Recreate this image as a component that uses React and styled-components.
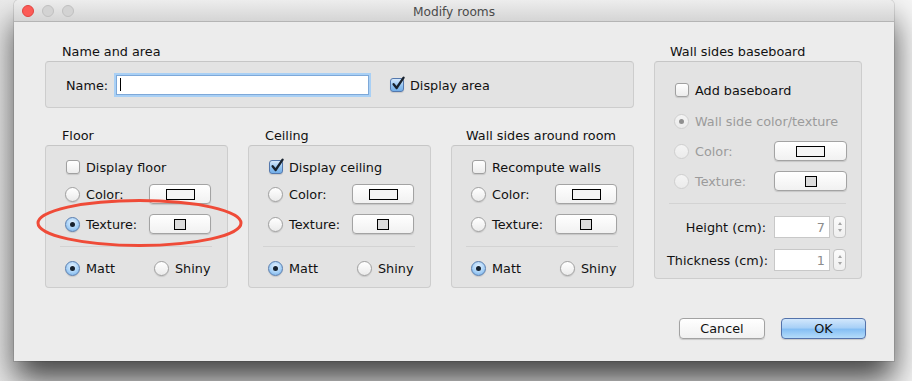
import React from 'react';
import styled, { createGlobalStyle } from 'styled-components';

const Global = createGlobalStyle`
  html, body { margin: 0; padding: 0; }
  body {
    background: #f5f5f5;
    font-family: "DejaVu Sans", "Liberation Sans", sans-serif;
    font-size: 12.8px;
    line-height: 16px;
    color: #111;
  }
`;

const Stage = styled.div`
  width: 912px;
  height: 381px;
  overflow: hidden;
  box-sizing: border-box;
  padding-left: 14px;
  background: linear-gradient(to right, #ececec 0, #f6f6f6 30px, #f6f6f6 100%);
`;

const Window = styled.div`
  position: relative;
  width: 880px;
  height: 361px;
  background: #ececec;
  border-radius: 5px 5px 0 0;
  box-shadow: 0 20px 32px rgba(0, 0, 0, 0.72), 0 0 0 1px rgba(0, 0, 0, 0.1);
  display: flex;
  flex-direction: column;
`;

const TitleBar = styled.div`
  height: 22px;
  flex: none;
  box-sizing: border-box;
  border-bottom: 1px solid #b4b4b4;
  border-radius: 5px 5px 0 0;
  background: linear-gradient(#ededed, #d5d5d5);
  display: grid;
  grid-template-columns: 1fr auto 1fr;
  align-items: center;
`;

const Lights = styled.div`
  display: flex;
  gap: 8px;
  padding-left: 8px;
`;

const Light = styled.span`
  width: 12px;
  height: 12px;
  box-sizing: border-box;
  border-radius: 50%;
  background: ${p => (p.$red ? '#fc5b57' : '#d3d3d3')};
  border: 1px solid ${p => (p.$red ? '#e1443f' : '#c0c0c0')};
`;

const Title = styled.div`
  font-size: 12.2px;
  color: #4a4a4a;
  padding-top: 2px;
`;

const Body = styled.div`
  display: flex;
  gap: 20px;
  padding: 21px 0 0 31px;
`;

const LeftCol = styled.div`
  width: 589px;
  display: flex;
  flex-direction: column;
`;

const RightCol = styled.div`
  width: 208px;
`;

const GroupGrid = styled.div`
  display: grid;
  grid-template-columns: repeat(3, 183px);
  gap: 20px;
  margin-top: 19px;
`;

const SectionTitle = styled.div`
  height: 17px;
  padding-top: 1px;
  box-sizing: border-box;
  margin-bottom: 1px;
  padding-left: ${p => p.$pl ?? 17}px;
`;

const GroupBox = styled.div`
  box-sizing: border-box;
  height: ${p => p.$h}px;
  background: #e3e3e3;
  border: 1px solid #cdcdcd;
  border-top-color: #c6c6c6;
  border-radius: 4px;
  padding-top: ${p => p.$pt ?? 0}px;
  display: flex;
  flex-direction: ${p => (p.$row ? 'row' : 'column')};
  align-items: ${p => (p.$row ? 'center' : 'stretch')};
  padding-left: ${p => (p.$row ? 20 : 0)}px;
`;

const NameLabel = styled.span`
  width: 50px;
  padding-top: 2px;
`;

const NameInput = styled.div`
  width: 253px;
  height: 20px;
  box-sizing: border-box;
  background: #fff;
  border: 1px solid #7ea8d8;
  box-shadow: 0 0 0 2px #a9d0f5;
  display: flex;
  align-items: center;
  padding-left: 3px;
`;

const Caret = styled.span`
  width: 1px;
  height: 13px;
  background: #000;
`;

const OptionRow = styled.div`
  display: flex;
  align-items: center;
  height: 20px;
  margin-top: ${p => p.$mt || 0}px;
  padding: 0 ${p => p.$pr ?? 16}px 0 19px;
  color: ${p => (p.$disabled ? '#9b9b9b' : '#111')};
`;

const InlineOption = styled.div`
  display: flex;
  align-items: center;
  margin-left: ${p => p.$ml || 0}px;
  width: ${p => (p.$w ? p.$w + 'px' : 'auto')};
`;

const RadioDot = styled.span`
  position: relative;
  flex: none;
  width: 15px;
  height: 15px;
  box-sizing: border-box;
  border-radius: 50%;
  border: 1px solid ${p => (p.$disabled ? '#cfcfcf' : p.$on ? '#5a7eaf' : '#a0a0a0')};
  background: ${p =>
    p.$disabled
      ? 'linear-gradient(#f4f4f4, #ebebeb)'
      : p.$on
      ? 'radial-gradient(circle at 50% 35%, #e6f2fe 0, #a7d1f7 55%, #6ea9e3 100%)'
      : 'linear-gradient(#ffffff, #ebebeb)'};
  box-shadow: ${p => (p.$disabled ? 'none' : '0 1px 1px rgba(0,0,0,0.12)')};
  &::after {
    content: '';
    display: ${p => (p.$on ? 'block' : 'none')};
    position: absolute;
    left: 50%;
    top: 50%;
    width: 5px;
    height: 5px;
    margin: -2.5px 0 0 -2.5px;
    border-radius: 50%;
    background: ${p => (p.$disabled ? '#8f8f8f' : '#17222f')};
  }
`;

const CheckBox = styled.span`
  position: relative;
  flex: none;
  width: 14px;
  height: 14px;
  margin-left: 1px;
  box-sizing: border-box;
  border-radius: 3px;
  border: 1px solid ${p => (p.$on ? '#5478ad' : '#a0a0a0')};
  background: ${p =>
    p.$on ? 'linear-gradient(#d6e9fc, #8fc1f0 60%, #73aee8)' : 'linear-gradient(#ffffff, #ececec)'};
  box-shadow: 0 1px 1px rgba(0, 0, 0, 0.12);
`;

const CheckMark = styled.svg`
  position: absolute;
  left: -1px;
  top: -4px;
  overflow: visible;
`;

const OptText = styled.span`
  margin-left: 6px;
  padding-top: 2px;
  white-space: nowrap;
`;

const SwatchButton = styled.div`
  margin-left: auto;
  width: ${p => p.$w}px;
  height: 20px;
  box-sizing: border-box;
  border: 1px solid #a3a3a3;
  border-radius: 4px;
  background: linear-gradient(#ffffff, #f1f1f1);
  box-shadow: 0 1px 1px rgba(0, 0, 0, 0.13);
  display: flex;
  align-items: center;
  justify-content: center;
`;

const Swatch = styled.span`
  width: ${p => (p.$texture ? 12 : 29)}px;
  height: 11px;
  box-sizing: border-box;
  border: 1px solid #000;
  background: ${p => (p.$texture ? '#dcdcdc' : '#f4f4f4')};
`;

const Divider = styled.div`
  height: 1px;
  background: #d3d3d3;
  margin: ${p => p.$mt}px 15px 0 14px;
`;

const NumRow = styled.div`
  display: flex;
  align-items: center;
  height: 22px;
  margin-top: ${p => p.$mt || 0}px;
  padding-left: 12px;
`;

const NumLabel = styled.span`
  width: 99px;
  text-align: right;
  white-space: nowrap;
  padding-top: 2px;
`;

const NumField = styled.div`
  margin-left: 8px;
  width: 56px;
  height: 22px;
  box-sizing: border-box;
  background: #fff;
  border: 1px solid #c8c8c8;
  color: #8c8c8c;
  text-align: right;
  padding-right: 4px;
  padding-top: 2px;
  line-height: 18px;
`;

const Stepper = styled.div`
  margin-left: 3px;
  width: 13px;
  height: 22px;
  box-sizing: border-box;
  border: 1px solid #c3c3c3;
  border-radius: 4px;
  background: linear-gradient(#fbfbfb, #efefef);
  display: flex;
  flex-direction: column;
  align-items: center;
  justify-content: center;
  gap: 4px;
`;

const Arrow = styled.span`
  width: 0;
  height: 0;
  border-left: 2.5px solid transparent;
  border-right: 2.5px solid transparent;
  ${p => (p.$down ? 'border-top: 3px solid #a5a5a5;' : 'border-bottom: 3px solid #a5a5a5;')}
`;

const Footer = styled.div`
  display: flex;
  justify-content: flex-end;
  gap: 16px;
  padding-right: 28px;
  margin-top: 30px;
`;

const DialogButton = styled.div`
  width: ${p => p.$w}px;
  height: 21px;
  box-sizing: border-box;
  border-radius: 4px;
  border: 1px solid ${p => (p.$primary ? '#5473ab' : '#a2a2a2')};
  background: ${p =>
    p.$primary
      ? 'linear-gradient(#d2e7fc 0, #a9d1f7 45%, #86bff4 55%, #b5dcfa 100%)'
      : 'linear-gradient(#ffffff, #f0f0f0)'};
  box-shadow: 0 1px 1px rgba(0, 0, 0, 0.15);
  display: flex;
  align-items: center;
  justify-content: center;
  padding-top: 1px;
  color: #111;
`;

const Annotation = styled.svg`
  position: absolute;
  left: 0;
  top: 0;
  pointer-events: none;
`;

function Radio({ on, disabled, children, ml, w }) {
  return (
    <InlineOption $ml={ml} $w={w}>
      <RadioDot $on={on} $disabled={disabled} />
      <OptText>{children}</OptText>
    </InlineOption>
  );
}

function Check({ on, children }) {
  return (
    <InlineOption>
      <CheckBox $on={on}>
        {on && (
          <CheckMark width="16" height="16" viewBox="0 0 16 16">
            <path d="M3.6 9.2 L6.6 13 L13.6 2.6" fill="none" stroke="#18222e" strokeWidth="2.3" strokeLinecap="round" strokeLinejoin="round" />
          </CheckMark>
        )}
      </CheckBox>
      <OptText>{children}</OptText>
    </InlineOption>
  );
}

function SurfaceGroup({ title, titlePl, checkLabel, checked, colorSel, textureSel }) {
  return (
    <div>
      <SectionTitle $pl={titlePl}>{title}</SectionTitle>
      <GroupBox $h={143} $pt={11}>
        <OptionRow>
          <Check on={checked}>{checkLabel}</Check>
        </OptionRow>
        <OptionRow $mt={7}>
          <Radio on={colorSel}>Color:</Radio>
          <SwatchButton $w={62}><Swatch /></SwatchButton>
        </OptionRow>
        <OptionRow $mt={10}>
          <Radio on={textureSel}>Texture:</Radio>
          <SwatchButton $w={62}><Swatch $texture /></SwatchButton>
        </OptionRow>
        <Divider $mt={12} />
        <OptionRow $mt={11}>
          <Radio on w={89}>Matt</Radio>
          <Radio>Shiny</Radio>
        </OptionRow>
      </GroupBox>
    </div>
  );
}

export default function App() {
  return (
    <Stage>
      <Global />
      <Window>
        <TitleBar>
          <Lights>
            <Light $red />
            <Light />
            <Light />
          </Lights>
          <Title>Modify rooms</Title>
          <span />
        </TitleBar>
        <Body>
          <LeftCol>
            <div>
              <SectionTitle>Name and area</SectionTitle>
              <GroupBox $h={47} $row>
                <NameLabel>Name:</NameLabel>
                <NameInput><Caret /></NameInput>
                <InlineOption $ml={20}>
                  <Check on>Display area</Check>
                </InlineOption>
              </GroupBox>
            </div>
            <GroupGrid>
              <SurfaceGroup title="Floor" checkLabel="Display floor" textureSel />
              <SurfaceGroup title="Ceiling" checkLabel="Display ceiling" checked />
              <SurfaceGroup title="Wall sides around room" titlePl={15} checkLabel="Recompute walls" />
            </GroupGrid>
          </LeftCol>
          <RightCol>
            <SectionTitle $pl={16}>Wall sides baseboard</SectionTitle>
            <GroupBox $h={218} $pt={18}>
              <OptionRow>
                <Check>Add baseboard</Check>
              </OptionRow>
              <OptionRow $mt={11} $disabled>
                <Radio on disabled>Wall side color/texture</Radio>
              </OptionRow>
              <OptionRow $mt={10} $disabled $pr={14}>
                <Radio disabled>Color:</Radio>
                <SwatchButton $w={73}><Swatch /></SwatchButton>
              </OptionRow>
              <OptionRow $mt={10} $disabled $pr={14}>
                <Radio disabled>Texture:</Radio>
                <SwatchButton $w={73}><Swatch $texture /></SwatchButton>
              </OptionRow>
              <Divider $mt={12} />
              <NumRow $mt={12}>
                <NumLabel>Height (cm):</NumLabel>
                <NumField>7</NumField>
                <Stepper><Arrow /><Arrow $down /></Stepper>
              </NumRow>
              <NumRow $mt={11}>
                <NumLabel>Thickness (cm):</NumLabel>
                <NumField>1</NumField>
                <Stepper><Arrow /><Arrow $down /></Stepper>
              </NumRow>
            </GroupBox>
          </RightCol>
        </Body>
        <Footer>
          <DialogButton $w={86}>Cancel</DialogButton>
          <DialogButton $w={85} $primary>OK</DialogButton>
        </Footer>
        <Annotation width="880" height="361" viewBox="0 0 880 361">
          <ellipse cx="125.5" cy="223" rx="101.5" ry="22.5" fill="none" stroke="#ef4b38" strokeWidth="3" />
        </Annotation>
      </Window>
    </Stage>
  );
}
